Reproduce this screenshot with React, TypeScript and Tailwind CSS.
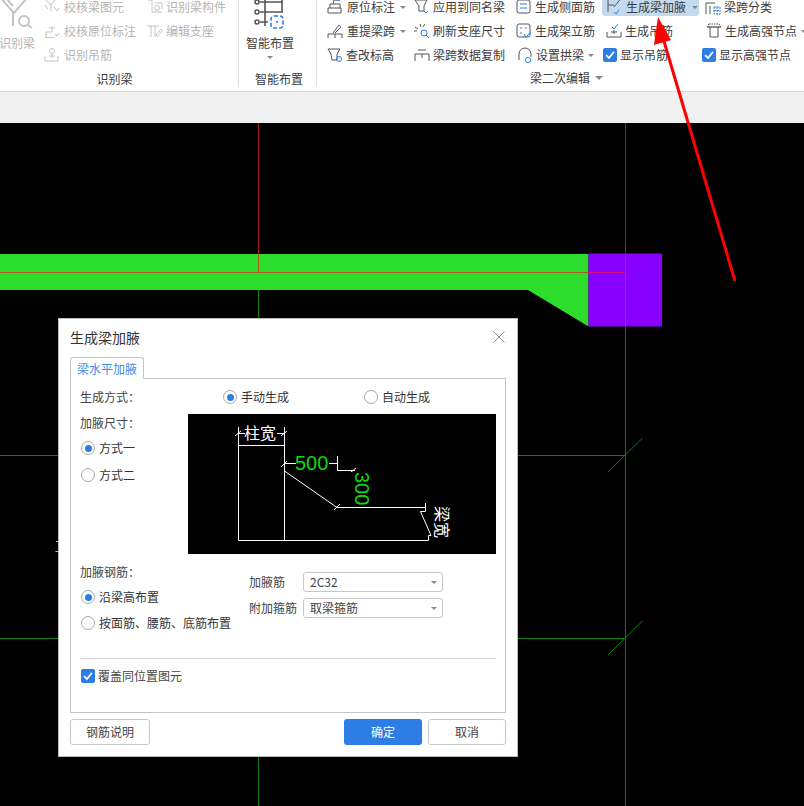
const BLUE = '#2e7de4'
const INK = '#555'
const FADE = '#c4c4c4'

function Ico({ children, color = INK }: { children: React.ReactNode; color?: string }) {
  return (
    <svg width="16" height="16" viewBox="0 0 16 16" fill="none" stroke={color} strokeWidth="1" className="shrink-0">
      {children}
    </svg>
  )
}

function Caret({ className = '' }: { className?: string }) {
  return (
    <span className={`inline-block w-0 h-0 border-x-[3px] border-x-transparent border-t-[3px] border-t-[#888] ${className}`} />
  )
}

function Check() {
  return (
    <span className="w-[14px] h-[14px] rounded-[2px] bg-[#2e7de4] flex items-center justify-center shrink-0">
      <svg width="14" height="14" viewBox="0 0 14 14" fill="none" stroke="#fff" strokeWidth="1.8">
        <path d="M3 7.2 L6 10 L11 3.8" />
      </svg>
    </span>
  )
}

function Radio({ on, label }: { on?: boolean; label: string }) {
  return (
    <div className="flex items-center gap-[4px] h-5 text-[#333]">
      <span className="w-[14px] h-[14px] rounded-full border border-[#a8a8a8] bg-white flex items-center justify-center shrink-0 ml-px">
        {on ? <span className="w-[7px] h-[7px] rounded-full bg-[#2e7de4]" /> : null}
      </span>
      <span>{label}</span>
    </div>
  )
}

function Tool({
  icon,
  label,
  caret,
  faded,
  gap = 'gap-[4px]',
  className = '',
}: {
  icon: React.ReactNode
  label: string
  caret?: boolean
  faded?: boolean
  gap?: string
  className?: string
}) {
  return (
    <div className={`flex items-center h-6 whitespace-nowrap ${gap} ${faded ? 'text-[#b4b4b4]' : 'text-[#3c3c3c]'} ${className}`}>
      {icon}
      <span>{label}</span>
      {caret ? <Caret className="ml-[1px]" /> : null}
    </div>
  )
}

function SelectBox({ value }: { value: string }) {
  return (
    <div className="w-[140px] h-5 border border-[#c8c8c8] rounded-[3px] bg-white pl-[6px] pr-[5px] flex items-center justify-between text-[#444]">
      <span>{value}</span>
      <Caret className="border-t-[#555]" />
    </div>
  )
}

function Sketch() {
  return (
    <svg width="308" height="140" viewBox="0 0 308 140" className="bg-black shrink-0" fill="none" stroke="#fff" strokeWidth="1">
      <path d="M50.5 31.5 H96.5 M50.5 13 V126.5 H240.5 V121.5 H243 L232.5 97.5 H237.5 V89 M96.5 13 V126.5" />
      <path d="M96.5 57 L149 93.5 H237" />
      <path d="M50 19.5 H57 M89 19.5 H96 M47 22 L53 17 M93 22 L99 17" />
      <path d="M96 49.5 H108 M141 49.5 H149.5 V56.5 H167 M149.5 42 V56.5 M93 53 L99 47 M163 58 L168 54 M146 96 L152 90" />
      <text x="56" y="25" fill="#fff" stroke="none" fontSize="16" fontFamily="'Noto Sans CJK SC', sans-serif">柱宽</text>
      <text x="107" y="56" fill="#0fd80f" stroke="none" fontSize="20" fontFamily="'Liberation Sans', sans-serif">500</text>
      <text transform="translate(167 58) rotate(90)" fill="#0fd80f" stroke="none" fontSize="20" fontFamily="'Liberation Sans', sans-serif">300</text>
      <text transform="translate(248 92) rotate(90)" fill="#fff" stroke="none" fontSize="16" fontFamily="'Noto Sans CJK SC', sans-serif">梁宽</text>
    </svg>
  )
}

function Dialog() {
  return (
    <div className="absolute left-[58px] top-[318px] w-[460px] h-[439px] bg-white border border-[#bdbdbd] pl-[11px] pr-[11px] text-[12px]">
      <div className="h-[36px] mb-[2px] flex items-center justify-between">
        <span className="text-[14px] text-[#333]">生成梁加腋</span>
        <svg width="12" height="12" viewBox="0 0 12 12" stroke="#8a8a8a" strokeWidth="1" className="mr-[1px]">
          <path d="M0.5 0.5 L11.5 11.5 M11.5 0.5 L0.5 11.5" />
        </svg>
      </div>
      <div className="w-[74px] h-[22px] border border-b-0 border-[#c4c4c4] rounded-t-[3px] bg-white flex items-center justify-center text-[#3b8de8] relative z-10 -mb-px">
        梁水平加腋
      </div>
      <div className="w-[436px] h-[335px] border border-[#c4c4c4] pl-[9px] pr-[9px] pt-[8px] text-[#444]">
        <div className="flex items-center h-5">
          <span className="w-[142px]">生成方式：</span>
          <div className="w-[141px]"><Radio on label="手动生成" /></div>
          <Radio label="自动生成" />
        </div>
        <div className="flex mt-[7px]">
          <div className="w-[108px]">
            <div className="h-[18px] leading-[18px]">加腋尺寸：</div>
            <div className="mt-[6px]"><Radio on label="方式一" /></div>
            <div className="mt-[7px]"><Radio label="方式二" /></div>
          </div>
          <Sketch />
        </div>
        <div className="flex mt-[10px]">
          <div className="w-[169px]">
            <div className="h-4 leading-4">加腋钢筋：</div>
            <div className="mt-[7px]"><Radio on label="沿梁高布置" /></div>
            <div className="mt-[6px] whitespace-nowrap"><Radio label="按面筋、腰筋、底筋布置" /></div>
          </div>
          <div className="pt-[8px]">
            <div className="flex items-center">
              <span className="w-[54px]">加腋筋</span>
              <SelectBox value="2C32" />
            </div>
            <div className="flex items-center mt-[6px]">
              <span className="w-[54px]">附加箍筋</span>
              <SelectBox value="取梁箍筋" />
            </div>
          </div>
        </div>
        <div className="mt-[25px] h-px bg-[#d4d4d4]" />
        <div className="mt-[7px] h-5 flex items-center gap-[3px] pl-px">
          <Check />
          <span>覆盖同位置图元</span>
        </div>
      </div>
      <div className="flex mt-[6px] w-[436px]">
        <button type="button" className="w-[80px] h-[26px] border border-[#c8c8c8] rounded-[3px] text-[#444]">钢筋说明</button>
        <button type="button" className="ml-auto w-[78px] h-[26px] rounded-[3px] bg-[#2e7de4] text-white">确定</button>
        <button type="button" className="ml-[6px] w-[78px] h-[26px] border border-[#c8c8c8] rounded-[3px] text-[#444]">取消</button>
      </div>
    </div>
  )
}

function Canvas() {
  return (
    <svg width="804" height="683" viewBox="0 123 804 683" className="block bg-black" fill="none">
      <path d="M258.5 272 V806 M625.5 272 V806 M0 455.5 H625.5 M0 638.5 H625.5 M608 472 L642.5 438 M608 655 L642.5 621" stroke="#0c800c" />
      <path d="M0 254 H588.5 V326.5 L528 290 H0 Z" fill="#2cdd2c" />
      <rect x="588.5" y="253.5" width="73.5" height="73" fill="#8800ff" />
      <path d="M625.5 326.5 V272" stroke="#3f6a70" />
      <path d="M258.5 123 V254 M625.5 123 V254" stroke="#a81818" />
      <path d="M0 272.5 H588 M258.5 254 V272" stroke="#a85a20" />
      <path d="M588 272.5 H625.5 M625.5 254 V272" stroke="#d0107a" />
      <path d="M56 541.5 H58 M55.5 551.5 H58" stroke="#bbb" />
    </svg>
  )
}

export default function App() {
  return (
    <div className="relative w-[804px] h-[806px] overflow-hidden bg-black text-[12px] font-['Noto_Sans_CJK_SC','Liberation_Sans',sans-serif]">
      <div className="h-[92px] bg-white border-b border-[#dcdcdc] flex overflow-hidden">
        {/* 识别梁 */}
        <div className="w-[239px] h-[87px] border-r border-[#e0e0e0] flex flex-col shrink-0">
          <div className="flex -mt-[5px] h-[76px]">
            <div className="w-[44px] pt-[5px] text-[#b4b4b4] whitespace-nowrap">
              <svg width="34" height="28" viewBox="0 0 34 28" fill="none" stroke={FADE} strokeWidth="2" className="block">
                <path d="M1 -2 L13 12 V26 M27 -2 L13 14 M6 -2 L13 6" />
                <circle cx="24" cy="21" r="5" />
                <path d="M28 25 L32 28" />
              </svg>
              <div className="mt-[6px] -ml-[1px]">识别梁</div>
            </div>
            <div className="w-[103px]">
              <Tool faded icon={<Ico color={FADE}><path d="M2 1 L7 6 V12 M11 1 L7 6 M10 8 L13 12 L15 9" /><path d="M1 6 L4 10" /></Ico>} label="校核梁图元" />
              <Tool faded icon={<Ico color={FADE}><path d="M1 14.5 H10 M2 14 V9 H8 V3 M5 5 H11 M11 11 L13 13 L15 10" /></Ico>} label="校核原位标注" />
              <Tool faded icon={<Ico color={FADE}><circle cx="8" cy="4" r="2.5" /><path d="M1 9 V14 H14 V9 M5 9 H11 M8 7 V11" /></Ico>} label="识别吊筋" />
            </div>
            <div>
              <Tool faded gap="gap-[3px]" icon={<Ico color={FADE}><path d="M1 1 H5 V13 H15 M8 4 H15 V10" /><circle cx="10" cy="9" r="2.5" /></Ico>} label="识别梁构件" />
              <Tool faded gap="gap-[3px]" icon={<Ico color={FADE}><path d="M0 3 H12 M4 3 V14 M8 3 V14 M9 12 L14 6 L15.5 7.5 L10.5 13.5 Z" /></Ico>} label="编辑支座" />
            </div>
          </div>
          <div className="h-4 leading-4 text-center text-[#3c3c3c] pr-[9px]">识别梁</div>
        </div>

        {/* 智能布置 */}
        <div className="w-[78px] h-[87px] border-r border-[#e0e0e0] flex flex-col shrink-0 text-[#3c3c3c]">
          <svg width="34" height="31" viewBox="0 0 34 31" fill="none" stroke={INK} strokeWidth="1.6" className="block shrink-0 ml-[13px]">
            <path d="M8 2 H31 M8 12 H31 M8 22 H16 M13 0 V26 M30 0 V12" />
            <circle cx="5" cy="2" r="2" />
            <circle cx="5" cy="12" r="2" />
            <circle cx="5" cy="22" r="2" />
            <rect x="19" y="16" width="12" height="12" rx="3" stroke={BLUE} strokeDasharray="4 2" />
            <circle cx="25" cy="22" r="1" fill={BLUE} stroke="none" />
          </svg>
          <div className="mt-[4px] h-[16px] leading-4 ml-[7px]">智能布置</div>
          <Caret className="mt-[5px] shrink-0 ml-[28px]" />
          <div className="mt-[12px] h-4 leading-4 ml-[16px]">智能布置</div>
        </div>

        {/* 梁二次编辑 */}
        <div className="flex-1 flex flex-col min-w-0">
          <div className="grid grid-cols-[87px_102px_86px_103px_102px] -mt-[5px] pl-[10px]">
            <Tool caret icon={<Ico><path d="M3 9 V5 H13 V9 M1 9 H14 V14 H1 Z M6 5 L7 1 H13" /><path d="M7 1 H13" stroke={BLUE} /></Ico>} label="原位标注" />
            <Tool gap="gap-[3px]" icon={<Ico><path d="M1 1 H13 L10 7 V12 H5 V7 Z" /><path d="M10 12 L12 14 L14 12" stroke={BLUE} /></Ico>} label="应用到同名梁" />
            <Tool gap="gap-[3px]" icon={<Ico><rect x="1" y="1" width="13" height="13" rx="2" /><path d="M4 5 H11 M4 9 H11" stroke={BLUE} /></Ico>} label="生成侧面筋" />
            <div className="flex items-center gap-[5px] h-[21px] pt-[3px] pl-[3px] w-[97px] bg-[#c3d9f0] rounded-b-[3px] whitespace-nowrap text-[#3c3c3c]">
              <Ico><path d="M2 0.5 H15 M3 0.5 V13 M3 6 H9 M15 0.5 L9 8" /><path d="M9 13 L11 15 L14 11" stroke={BLUE} /></Ico>
              <span>生成梁加腋</span>
              <Caret className="ml-[1px]" />
            </div>
            <Tool gap="gap-[3px]" icon={<Ico><path d="M1 15 V4 H10 M5 15 V7" /><path d="M9 8 H15 V15 H9 Z M9 11.5 H15 M12 8 V15" stroke={BLUE} strokeDasharray="2 1" /></Ico>} label="梁跨分类" />

            <Tool caret icon={<Ico><path d="M1 15 V11 H15 V15 M8 11 V15 M6 10 L12 2 L14 4 L8 10" /><path d="M12 2 L14 4" stroke={BLUE} /></Ico>} label="重提梁跨" />
            <Tool gap="gap-[3px]" icon={<Ico><path d="M0 8 H3 M6 1 L7 4 M11 1 L9 4 M1 4 L4 6" /><circle cx="10" cy="10" r="3" stroke={BLUE} /><path d="M12 12 L15 15" stroke={BLUE} /></Ico>} label="刷新支座尺寸" />
            <Tool gap="gap-[3px]" icon={<Ico><rect x="1" y="1" width="13" height="13" rx="2" /><path d="M4 5 H6 M9 5 H11 M4 10 H6" stroke={BLUE} /><path d="M8 11 L10 14 L15 9" stroke={BLUE} /></Ico>} label="生成架立筋" />
            <Tool gap="gap-[3px]" className="pl-[4px]" icon={<Ico><path d="M1 9 V14 H15 V9 M5 9 H11 M8 7 V11" /><path d="M6 4 L8 6 L12 1" stroke={BLUE} /></Ico>} label="生成吊筋" />
            <Tool caret gap="gap-[3px]" className="pl-px" icon={<Ico><path d="M1 4 H15 M4 4 V14 H12 V4" /><path d="M3 1 H13 L15 4 H1 Z" strokeDasharray="1.5 1" /></Ico>} label="生成高强节点" />

            <Tool gap="gap-[3px]" icon={<Ico><path d="M1 2 H13 L10 7 V13 H5 L4 7 Z" /><circle cx="12" cy="12" r="2.5" stroke={BLUE} /></Ico>} label="查改标高" />
            <Tool gap="gap-[3px]" icon={<Ico><path d="M1 14 V7 H15 V14 M4 3 H12 M8 7 V11" /></Ico>} label="梁跨数据复制" />
            <Tool caret className="pl-px" gap="gap-[3px]" icon={<Ico><path d="M2 13 V7 A6 6 0 0 1 14 7 V10" /><circle cx="11" cy="13" r="2.5" stroke={BLUE} /></Ico>} label="设置拱梁" />
            <Tool className="pl-px" gap="gap-[3px]" icon={<Check />} label="显示吊筋" />
            <Tool className="-ml-[3px]" gap="gap-[3px]" icon={<Check />} label="显示高强节点" />
          </div>
          <div className="flex items-center gap-[5px] h-4 mt-[3px] pl-[213px] text-[#3c3c3c]">
            <span>梁二次编辑</span>
            <Caret className="border-x-[4px] border-t-[4px]" />
          </div>
        </div>
      </div>
      <div className="h-[31px] bg-[#f0f0f0]" />
      <Canvas />
      <Dialog />
      {/* annotation arrow */}
      <svg width="804" height="300" className="absolute left-0 top-0 pointer-events-none" fill="none">
        <path d="M735 281 L663 38" stroke="#ff0000" strokeWidth="3" />
        <path d="M658 17 L671 40 L654 45 Z" fill="#ff0000" />
      </svg>
    </div>
  )
}
